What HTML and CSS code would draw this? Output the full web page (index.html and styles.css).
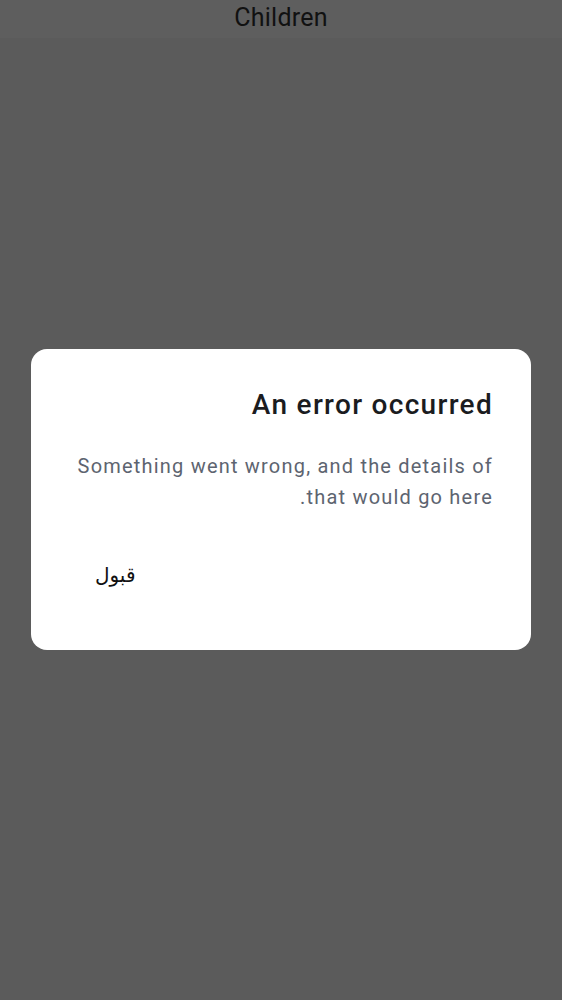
FILE: index.html
```html
<!DOCTYPE html>
<html lang="ar">
<head>
<meta charset="utf-8">
<link rel="stylesheet" href="styles.css">
</head>
<body>
<div class="screen">
  <header class="topbar">Children</header>
  <div class="center">
    <div class="dialog" dir="rtl">
      <h2 class="title">An error occurred</h2>
      <p class="body">Something went wrong, and the details of that would go here.</p>
      <div class="actions">
        <button class="btn">قبول</button>
      </div>
    </div>
  </div>
</div>
</body>
</html>
```

FILE: styles.css
```css
html, body {
  margin: 0;
  padding: 0;
}
body {
  background: #5b5b5b;
  font-family: Roboto, "Noto Sans", "DejaVu Sans", sans-serif;
}
.screen {
  width: 562px;
  height: 1000px;
  display: flex;
  flex-direction: column;
}
.topbar {
  height: 38px;
  flex: none;
  background: #5e5e5e;
  color: #111111;
  font-size: 25px;
  letter-spacing: 0.25px;
  text-align: center;
  line-height: 35px;
}
.center {
  flex: 1;
  display: flex;
  justify-content: center;
  padding-top: 311px;
}
.dialog {
  width: 500px;
  height: 301px;
  box-sizing: border-box;
  background: #ffffff;
  border-radius: 16px;
  padding: 38px 38px 0 38px;
  align-self: flex-start;
}
.title {
  margin: 0;
  font-size: 28px;
  font-weight: 500;
  letter-spacing: 1.3px;
  line-height: 36px;
  color: #1b1c1f;
}
.body {
  margin: 28px 0 0 0;
  font-size: 20px;
  letter-spacing: 1.2px;
  line-height: 31px;
  color: #5d6470;
}
.actions {
  display: flex;
  justify-content: flex-end;
  margin-top: 38px;
}
.btn {
  border: none;
  background: transparent;
  font-family: "DejaVu Sans", sans-serif;
  font-size: 20px;
  color: #111111;
  height: 48px;
  padding: 0 26px;
}
```
